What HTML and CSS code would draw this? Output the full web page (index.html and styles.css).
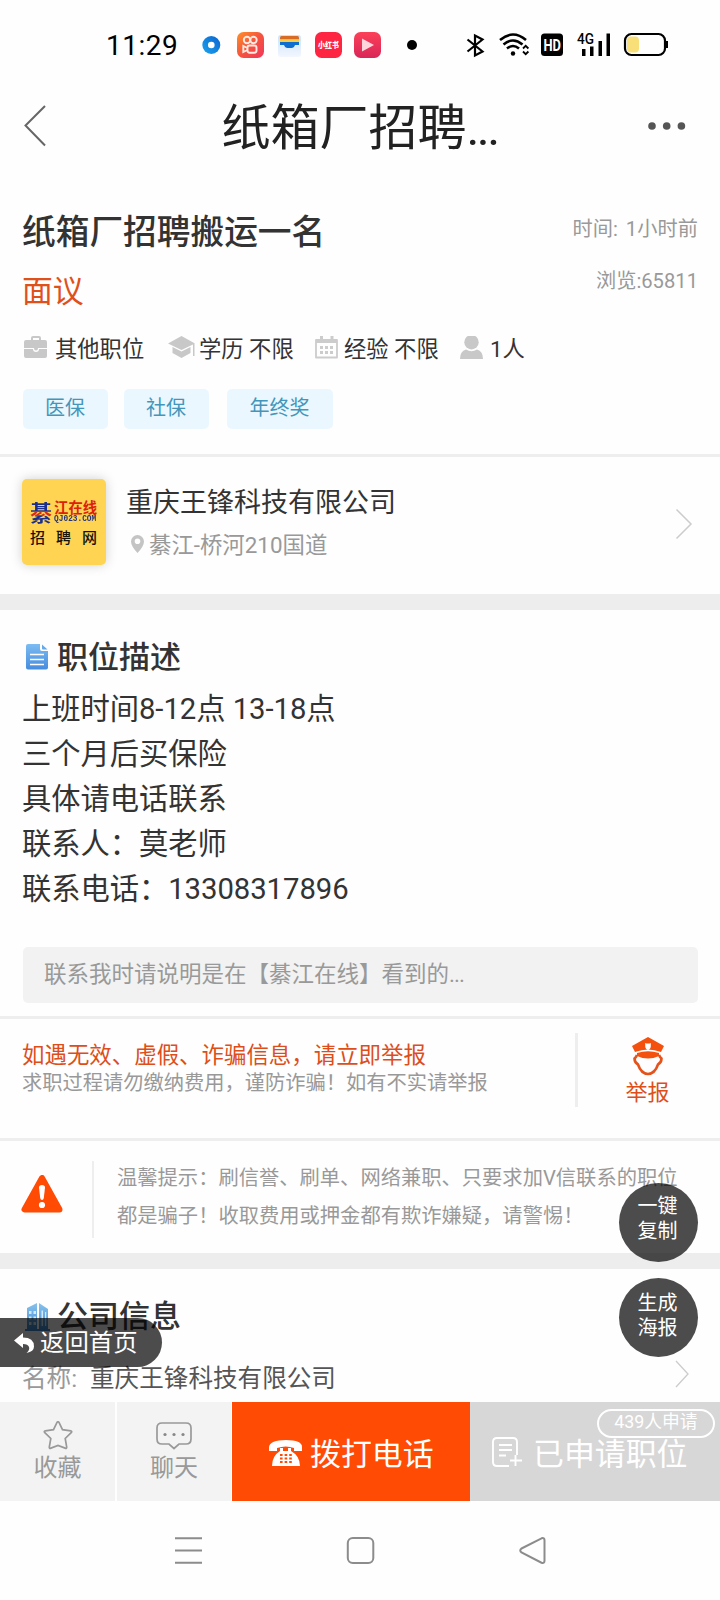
FILE: index.html
```html
<!DOCTYPE html>
<html lang="zh-CN">
<head>
<meta charset="utf-8">
<title>纸箱厂招聘搬运一名</title>
<link rel="stylesheet" href="styles.css">
</head>
<body>
<div class="phone">
  <header class="status">
    <span class="clock">11:29</span>
    <svg class="app-icons" width="220" height="32" viewBox="200 29 220 32">
      <defs>
        <linearGradient id="ks" x1="0" y1="0" x2="1" y2="1"><stop offset="0" stop-color="#ff9027"/><stop offset=".5" stop-color="#f5543f"/><stop offset="1" stop-color="#f2355c"/></linearGradient>
        <linearGradient id="bl" x1="0" y1="1" x2="1" y2="0"><stop offset="0" stop-color="#1ca4ee"/><stop offset="1" stop-color="#0a62cf"/></linearGradient>
        <linearGradient id="pl" x1="0" y1="0" x2="0" y2="1"><stop offset="0" stop-color="#fb4058"/><stop offset="1" stop-color="#d92658"/></linearGradient>
        <linearGradient id="wl" x1="0" y1="0" x2="0" y2="1"><stop offset="0" stop-color="#c9e3fd"/><stop offset="1" stop-color="#f3f7fe"/></linearGradient>
      </defs>
      <circle cx="211.300" cy="45" r="9" fill="url(#bl)"/><circle cx="211.300" cy="45" r="3.300" fill="#fff"/>
      <rect x="237" y="32" width="27" height="26" rx="6.500" fill="url(#ks)"/>
      <g fill="none" stroke="#ffe9e2" stroke-width="1.900"><circle cx="247" cy="40" r="3.200"/><circle cx="253.500" cy="40" r="3.200"/><rect x="247.500" y="45.500" width="9" height="7.200" rx="2.200"/><path d="M247.500 48l-4.200-2v6l4.200-2"/></g>
      <rect x="278" y="35" width="23" height="22" rx="3" fill="url(#wl)"/>
      <path d="M280 39.500v-2a1.500 1.500 0 0 1 1.500-1.500h16a1.500 1.500 0 0 1 1.500 1.500v2z" fill="#d96c24"/><path d="M280 39.500h19v3h-19z" fill="#f8ce46"/><path d="M280 42h19v3h-4q-1 3-3.500 3h-4q-2.500 0-3.500-3h-4z" fill="#0f6fd0"/>
      <rect x="315" y="32" width="27" height="26" rx="6.500" fill="#fd2541"/>
      <rect x="354" y="32" width="27" height="26" rx="6.500" fill="url(#pl)"/>
      <path d="M362 38.500v13l12-6.500z" fill="#ffd5dc"/>
      <circle cx="412" cy="45" r="5"/>
      <text class="xhs" x="328.500" y="48" text-anchor="middle" textLength="21" lengthAdjust="spacingAndGlyphs">小红书</text>
    </svg>
    <svg class="sys-icons" width="210" height="32" viewBox="460 29 210 32">
      <path d="M467.500 39.500l15 12-7.500 4v-20l7.500 4-15 12" fill="none" stroke="#000" stroke-width="2.200"/>
      <g fill="none" stroke="#000" stroke-width="2.600"><path d="M500 40q13-11 26 0M503.500 44.500q9.500-8 19 0M507 48.500q6-5 12 0"/><path d="M523 48.500l2.700-2.700 2.700 2.700M523 51.500l2.700 2.700 2.700-2.700" stroke-width="1.800"/></g>
      <circle cx="513" cy="53.500" r="2.200"/>
      <rect x="541" y="33.500" width="22" height="22.500" rx="3.500"/>
      <text class="hd" x="543.500" y="50.500" textLength="17.500" lengthAdjust="spacingAndGlyphs">HD</text>
      <text class="fourg" x="577" y="44" textLength="17" lengthAdjust="spacingAndGlyphs">4G</text>
      <path d="M582 49h3.500v7H582zM590 46.500h3.500v9.500H590zM598.500 41h3.500v15h-3.500zM606.500 33.500h3.500V56h-3.500z"/>
      <rect x="625" y="34" width="40" height="21" rx="6.500" fill="none" stroke="#000" stroke-width="2.200"/><rect x="627" y="36.500" width="12" height="16" rx="4" fill="#f9df78"/><path d="M665.500 41h2.500v7h-2.500z"/>
    </svg>
  </header>

  <nav class="titlebar">
    <svg class="back" width="24" height="44" viewBox="0 0 24 44"><path d="M22 1L2.500 20.500 22 40.500" fill="none" stroke="#666" stroke-width="2"/></svg>
    <h1>纸箱厂招聘<span>...</span></h1>
    <svg class="more" width="40" height="12" viewBox="0 0 40 12" fill="#555"><circle cx="6" cy="5" r="3.800"/><circle cx="20.700" cy="5" r="3.800"/><circle cx="35.400" cy="5" r="3.800"/></svg>
  </nav>

  <section class="job">
    <div class="row"><h2>纸箱厂招聘搬运一名</h2><span class="meta time">时间: 1小时前</span></div>
    <div class="row second"><span class="salary">面议</span><span class="meta views">浏览:65811</span></div>
    <ul class="facts">
      <li><svg width="32" height="26" viewBox="-1 1 32 26" fill="#c8c8c8"><path d="M7 5V3q0-2 2-2h6q2 0 2 2v2h4q2 0 2 2v6H0V7q0-2 2-2h5zM9 5h6V3H9zM0 14h9a3 3 0 0 0 6 0h8v7q0 2-2 2H2q-2 0-2-2z" fill-rule="evenodd"/><circle cx="12" cy="13.500" r="2"/></svg>其他职位</li>
      <li><svg width="32" height="26" viewBox="-1 1 32 26" fill="#c8c8c8"><path d="M0 8.500L13.500 1 27 8.500 13.500 15zM4.500 12l9 4.500 9-4.500v6l-9 5-9-5zM25 9h1.500v12H25z"/></svg>学历 不限</li>
      <li><svg width="30" height="26" viewBox="-1 1 30 26"><path d="M1 5h21v17.500H1z" fill="none" stroke="#ccc" stroke-width="1.800" stroke-linejoin="round"/><path d="M1 5h21v3H1zM5 0h3v6H5zM15.500 0h3v6h-3zM5 11h3v3H5zM10 11h3v3h-3zM15 11h3v3h-3zM5 16h3v3H5zM10 16h3v3h-3zM15 16h3v3h-3z" fill="#ccc"/></svg>经验 不限</li>
      <li><svg width="30" height="26" viewBox="0 1 30 26" fill="#c8c8c8"><circle cx="11.500" cy="7.200" r="7.200"/><path d="M0 24q0-8 6-9.500 5.500 3.500 11 0 6 1.500 6 9.500z"/></svg>1人</li>
    </ul>
    <div class="tags"><span>医保</span><span>社保</span><span>年终奖</span></div>
  </section>

  <section class="company">
    <div class="logo">
      <div class="brand"><b>綦</b><div><em>江在线</em><i>QJ023.COM</i></div></div>
      <div class="net"><span>招</span><span>聘</span><span>网</span></div>
    </div>
    <div class="info">
      <strong>重庆王锋科技有限公司</strong>
      <p><svg width="18" height="20" viewBox="0 0 18 20"><path d="M6.500 0a6.500 6.500 0 0 1 6.500 6.500Q13 11 6.500 18 0 11 0 6.500A6.500 6.500 0 0 1 6.500 0zm0 3.500a2.800 2.800 0 1 0 0 5.600 2.800 2.800 0 0 0 0-5.600z" fill="#c4c4c4"/></svg>綦江-桥河210国道</p>
    </div>
    <svg class="chev" width="18" height="32" viewBox="0 0 18 32"><path d="M1.500 1.500L16 16 1.500 30.500" fill="none" stroke="#ccc" stroke-width="1.500"/></svg>
  </section>

  <section class="desc">
    <h3><svg width="31" height="28" viewBox="0 1.500 31 28"><defs><linearGradient id="doc" x1="0" y1="0" x2="0" y2="1"><stop offset="0" stop-color="#7cbcf2"/><stop offset="1" stop-color="#458cdd"/></linearGradient></defs><path d="M2 1.500h12v5q0 2 2 2h6V25q0 2-2 2H2q-2 0-2-2V3.500q0-2 2-2z" fill="url(#doc)"/><path d="M16 2l5.500 5H17q-1 0-1-1z" fill="#64a9ec"/><path d="M4 12h14M4 17h14M4 22h14" stroke="#fff" stroke-width="1.600"/></svg>职位描述</h3>
    <p>上班时间8-12点 13-18点<br>三个月后买保险<br>具体请电话联系<br>联系人：莫老师<br>联系电话：13308317896</p>
    <div class="notice">联系我时请说明是在【綦江在线】看到的<span>...</span></div>
  </section>

  <section class="report">
    <div class="report-text"><strong>如遇无效、虚假、诈骗信息，请立即举报</strong><span>求职过程请勿缴纳费用，谨防诈骗！如有不实请举报</span></div>
    <div class="report-btn">
      <svg width="32" height="40" viewBox="0 0 32 40"><path d="M0 9L16 0l16 9-3 6q-13-5-26 0zM5 16q11-3.500 22 0v3q-11 5-22 0z" fill="#f4500e"/><path d="M13.200 6q2.800 1 5.600 0v3q0 3-2.800 4-2.800-1-2.800-4z" fill="#fff"/><path d="M5 18q-1 2.500-2.500 3.500 0 4 3.500 6 3 9 10 9.500 7-.5 10-9.500 3.500-2 3.500-6Q28 20.500 27 18" fill="none" stroke="#e5531c" stroke-width="2.600"/></svg>
      <span>举报</span>
    </div>
  </section>

  <section class="tip">
    <div class="tip-icon"><svg width="42" height="38" viewBox="0 0 42 38"><path d="M21 3L3.500 34.500h35z" fill="#ff4b04" stroke="#ff4b04" stroke-width="6" stroke-linejoin="round"/><path d="M18 12.500q0-2.500 3-2.500t3 2.500L22.800 23q-.3 2-1.800 2t-1.800-2z" fill="#fff"/><circle cx="21" cy="30" r="3.100" fill="#fff"/></svg></div>
    <p>温馨提示：刷信誉、刷单、网络兼职、只要求加V信联系的职位<br>都是骗子！收取费用或押金都有欺诈嫌疑，请警惕！</p>
  </section>

  <section class="about">
    <h3><svg width="32" height="30" viewBox="0 0 32 30"><defs><linearGradient id="bd" x1="0" y1="0" x2="0" y2="1"><stop offset="0" stop-color="#88c2ee"/><stop offset="1" stop-color="#3e8ad2"/></linearGradient></defs><path d="M2 6l10-5v26H2zM14 1l9 6v21h-9zM0 27h25v2H0z" fill="url(#bd)"/><path d="M4 9h2.500v3H4zM8.500 9H11v3H8.500zM4 14.500h2.500v3H4zM8.500 14.500H11v3H8.500zM4 20h2.500v3H4zM8.500 20H11v3H8.500zM16.500 8.500H18V24h-1.500zM20 10h1.200v14H20z" fill="#d4eafb"/></svg>公司信息</h3>
    <div class="name"><span>名称:</span>重庆王锋科技有限公司<svg width="14" height="28" viewBox="0 0 14 28"><path d="M1 1l12 13L1 27" fill="none" stroke="#ccc" stroke-width="1.300"/></svg></div>
  </section>

  <footer class="actions">
    <div class="act"><svg width="30" height="30" viewBox="0 0 30 30"><path d="M14 1.500q1-1.500 2 0l3.500 7.200 8.200 1.200q1.700.4.500 1.800l-6 5.800 1.500 8.500q.1 1.800-1.600 1.100L15 24.500l-7.100 2.600q-1.700.7-1.600-1.100l1.500-8.500-6-5.800q-1.200-1.400.5-1.800l8.200-1.200z" fill="none" stroke="#999" stroke-width="1.700"/></svg>收藏</div>
    <div class="act"><svg width="36" height="30" viewBox="0 0 36 30"><path d="M6 2h24q5 0 5 5v11q0 5-5 5h-7l-5 4.500-5-4.500H6q-5 0-5-5V7q0-5 5-5z" fill="none" stroke="#999" stroke-width="1.700"/><g fill="#888"><circle cx="9" cy="13.500" r="1.600"/><circle cx="18" cy="13.500" r="1.600"/><circle cx="27" cy="13.500" r="1.600"/></g></svg>聊天</div>
    <div class="call"><svg width="41" height="28" viewBox="0 0 41 28"><path d="M0 12V8Q1 1 17 1t16 7v4h-8V9q-8-3-17 0v3zM11 9h3v3h5V9h3v3q9 5 9 15H3q0-10 8-15z" fill="#fff"/><path d="M11 16h12M11 19.500h12M11 23h12" stroke="#ff4b04" stroke-width="2" stroke-dasharray="2.600 2"/></svg><span>拨打电话</span></div>
    <div class="applied"><svg width="41" height="32" viewBox="0 0 41 32"><path d="M25 18V5q0-4-4-4H5Q1 1 1 5v20q0 4 4 4h12M7 8h13M7 13h13M7 18.500h7M23.500 18v11M18 23.500h12" fill="none" stroke="#fff" stroke-width="1.900"/></svg><span>已申请职位</span><span class="badge">439人申请</span></div>
  </footer>

  <div class="sysnav">
    <svg width="720" height="32" viewBox="0 1534 720 32" fill="none" stroke="#8c8c8c" stroke-width="2"><path d="M175 1538.300h27M175 1550.500h27M175 1562.800h27"/><rect x="347.800" y="1538" width="25.500" height="25" rx="5"/><path d="M521.500 1548.500l20-10.200q3-1 3 2v20.400q0 3-3 2l-20-10.200q-2.500-2 0-4z"/></svg>
  </div>

  <div class="home"><svg width="26" height="22" viewBox="0 0 26 22"><path d="M0 8.500L9 1v4.500q11 0 11 9 0 5-7.500 6.500 3.500-3 2.500-6-1-3-6-3V16z" fill="#fff"/></svg>返回首页</div>
  <div class="fab copy">一键<br>复制</div>
  <div class="fab poster">生成<br>海报</div>
</div>
</body>
</html>
```
FILE: styles.css
```css
* { box-sizing: border-box; margin: 0; padding: 0; }
body { background: #fff; font-family: Roboto, "Noto Sans CJK SC", sans-serif; color: #333; }
svg { display: block; flex: none; }
ul { list-style: none; }
.phone { position: relative; width: 720px; height: 1600px; overflow: hidden; background: #fefefe; }

.status { height: 88px; display: flex; align-items: flex-start; padding: 29px 0 0 106px; color: #000; }
.clock { width: 94px; font-size: 28px; line-height: 33px; letter-spacing: .5px; white-space: nowrap; }
.sys-icons { margin-left: 40px; }
.xhs { font: 900 8px "Noto Sans CJK SC", sans-serif; fill: #fff; }
.hd { font: 700 16px Roboto, sans-serif; fill: #fff; }
.fourg { font: 500 14px Roboto, sans-serif; }

.titlebar { height: 78px; display: flex; justify-content: space-between; align-items: center; padding: 0 34px 0 23px; }
.titlebar h1 { font-size: 49px; font-weight: 400; line-height: 78px; color: #222; padding: 4px 0 0 26px; }
.titlebar h1 span { letter-spacing: -2.600px; }

.job { height: 291px; padding: 44px 22px 0; border-bottom: 3px solid #eee; }
.row { display: flex; justify-content: space-between; height: 42px; line-height: 42px; }
.row h2 { font-size: 33.700px; font-weight: 500; line-height: 46px; }
.row .meta { color: #999; font-size: 20.200px; font-weight: 400; }
.row .time { letter-spacing: .1px; word-spacing: 2.500px; line-height: 39px; }
.second { height: 60px; margin-top: 8px; line-height: 64px; }
.salary { font-size: 30.800px; color: #e0501a; }
.second .views { line-height: 43px; }
.facts { display: flex; align-items: flex-start; height: 61px; padding: 16px 0 0 1px; line-height: 44px; font-size: 22.300px; white-space: nowrap; }
.facts li { display: flex; align-items: center; height: 44px; margin-top: -9px; }
.facts li:nth-child(1) { width: 144px; }
.facts li:nth-child(2) { width: 147px; }
.facts li:nth-child(3) { width: 145px; }
.facts li:nth-child(4) { margin-left: 1px; }
.tags { display: flex; padding-left: 1px; margin-top: 8px; }
.tags span { width: 85px; height: 40px; border-radius: 5px; background: #ebf7ff; color: #4396ba; font-size: 20px; line-height: 38px; text-align: center; margin-right: 16px; padding-right: 1px; }
.tags span:last-child { width: 106px; margin-left: 2px; }

.company { height: 153px; padding: 22px 27px 0 22px; display: flex; border-bottom: 16px solid #ededed; }
.logo { width: 84px; height: 86px; border-radius: 5px; background: #ffd452; box-shadow: 0 0 12px rgba(0,0,0,.18); padding: 20px 9px 0 8px; font-family: "Noto Sans CJK SC", sans-serif; }
.brand { display: flex; height: 28px; justify-content: space-between; }
.brand b { font-size: 22px; line-height: 25px; font-weight: 700; background: linear-gradient(#1d2f8d 0 42%, #d52a1c 42% 60%, #1d2f8d 60%); background-clip: text; -webkit-background-clip: text; color: transparent; }
.brand em { display: block; font-style: normal; font-weight: 700; font-size: 14.300px; line-height: 16px; color: #dc220b; white-space: nowrap; }
.brand i { display: block; font: 700 7.800px/9px "Liberation Mono", monospace; color: #26357f; transform: scaleY(1.2); }
.net { display: flex; justify-content: space-between; font-size: 15px; line-height: 20px; font-weight: 500; color: #171208; }
.info { margin-left: 20px; flex: 1; }
.info strong { display: block; font-size: 27px; line-height: 48px; font-weight: 400; }
.info p { display: flex; align-items: center; font-size: 22.400px; line-height: 36px; color: #999; padding-left: 5px; }
.chev { margin-top: 29px; }

.desc { height: 409px; padding: 29px 22px 0; border-bottom: 3px solid #eee; }
h3 { display: flex; align-items: center; font-size: 31px; line-height: 38px; font-weight: 500; padding-left: 4px; }
.desc p { font-size: 29.300px; line-height: 45px; padding-top: 10px; letter-spacing: -.06px; }
.notice { margin: 35px 0 0 1px; width: 675px; height: 56px; border-radius: 5px; background: #f2f2f2; color: #999; font-size: 22.500px; line-height: 54px; padding-left: 21px; }
.notice span { letter-spacing: -1px; }

.report { height: 122px; display: flex; padding: 14px 22px 0; border-bottom: 3px solid #eee; }
.report-text { width: 556px; height: 74px; border-right: 3px solid #eee; white-space: nowrap; padding-top: 8px; }
.report-text strong { display: block; font-size: 22.450px; line-height: 28px; font-weight: 400; color: #dd4e1b; }
.report-text span { display: block; font-size: 20.250px; line-height: 28px; color: #999; }
.report-btn { flex: 1; display: flex; flex-direction: column; align-items: center; padding: 4px 0 0 19px; color: #dd4e1b; font-size: 22px; line-height: 32px; }

.tip { height: 128px; display: flex; padding: 20px 0 0 21px; border-bottom: 16px solid #ededed; }
.tip-icon { width: 73px; height: 77px; border-right: 2px solid #eee; padding-top: 14px; }
.tip p { margin: -2px 0 0 23px; font-size: 20.300px; line-height: 38px; color: #999; white-space: nowrap; }

.about { height: 133px; padding: 29px 31px 0 22px; overflow: hidden; }
.about h3 { padding-left: 3px; }
.name { display: flex; height: 40px; align-items: center; margin-top: 23px; font-size: 24.600px; line-height: 40px; color: #555; }
.name span { width: 68px; color: #999; }
.name svg { margin: -10px 0 0 auto; }

.actions { height: 99px; display: flex; }
.act { width: 115px; margin-right: 2px; background: #f3f3f3; display: flex; flex-direction: column; align-items: center; padding-top: 19px; color: #999; font-size: 24px; line-height: 34px; }
.act + .act { width: 114px; margin-right: 1px; }
.call, .applied { display: flex; align-items: center; color: #fff; font-size: 30.900px; line-height: 99px; }
.call > span, .applied > span:not(.badge) { padding-top: 5px; }
.call { width: 238px; background: #ff4b04; padding: 2px 0 0 37px; }
.call > span, .applied > span:not(.badge) { line-height: 94px; }
.applied { position: relative; flex: 1; background: #d7d7d7; padding: 2px 0 0 22px; }
.badge { position: absolute; left: 127px; top: 7px; width: 118px; height: 29px; border: 2px solid #fff; border-radius: 15px; font-size: 17.800px; line-height: 22px; text-align: center; }
.sysnav { padding-top: 33px; }

.home { position: absolute; left: 0; top: 1318px; width: 162px; height: 49px; border-radius: 0 25px 25px 0; background: rgba(0,0,0,.7); color: #fff; font-size: 24.400px; line-height: 49px; display: flex; align-items: center; padding-left: 14px; }
.fab { position: absolute; left: 619px; width: 79px; height: 79px; border-radius: 50%; background: rgba(0,0,0,.7); color: #fff; font-size: 20px; line-height: 24.500px; text-align: center; padding: 12px 2px 0 0; }
.copy { top: 1183px; }
.copy { padding-top: 11px; }
.poster { top: 1278px; padding-top: 13px; }
```
